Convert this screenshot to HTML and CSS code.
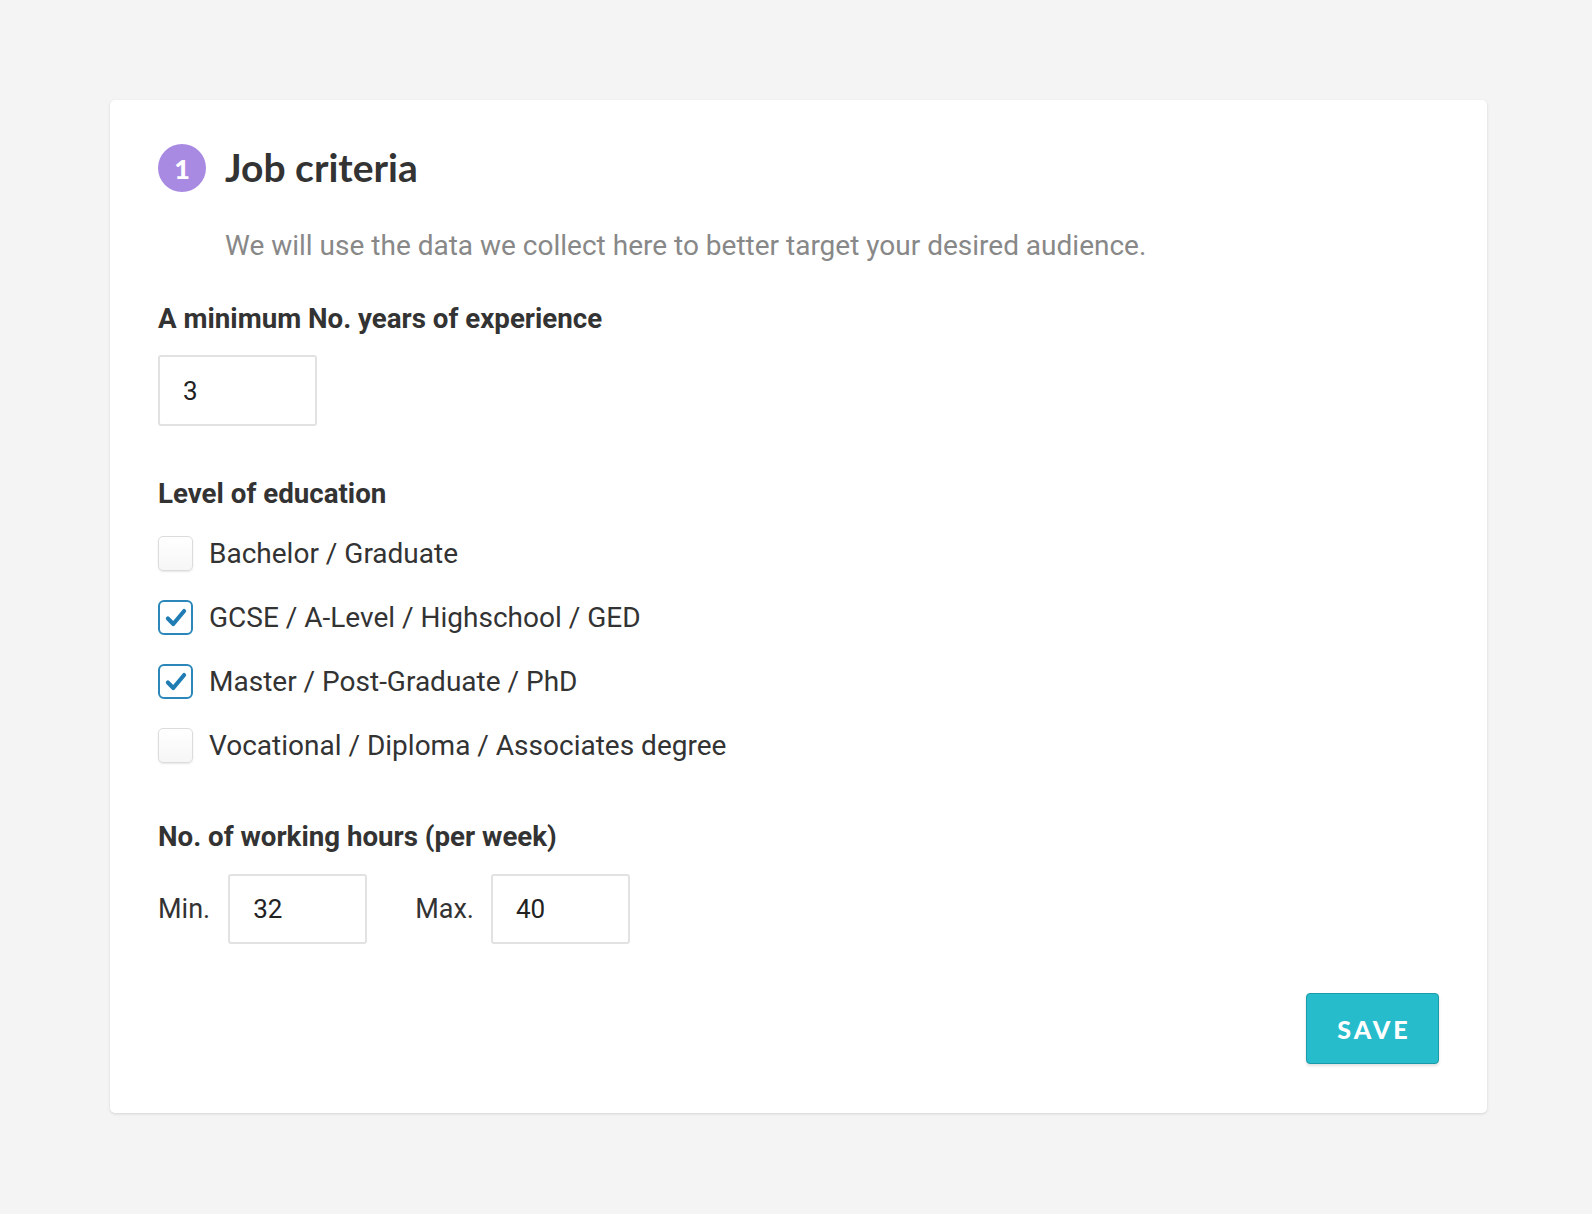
FILE: index.html
```html
<!DOCTYPE html>
<html lang="en">
<head>
<meta charset="utf-8">
<title>Job criteria</title>
<link rel="stylesheet" href="styles.css">
</head>
<body>
<main class="page">
  <section class="card">
    <header class="card-head">
      <span class="step">1</span>
      <h1 class="title">Job criteria</h1>
    </header>
    <p class="intro">We will use the data we collect here to better target your desired audience.</p>

    <div class="field">
      <label class="label">A minimum No. years of experience</label>
      <div class="input input-years">3</div>
    </div>

    <div class="field field-edu">
      <div class="label">Level of education</div>
      <ul class="checks">
        <li class="check-row"><span class="box"></span><span>Bachelor / Graduate</span></li>
        <li class="check-row"><span class="box checked"><svg viewBox="0 0 24 24" width="26" height="26"><path d="M4.5 12.5 L9.5 17.5 L19.5 5.5" fill="none" stroke="#1f7db4" stroke-width="3.8" stroke-linecap="round" stroke-linejoin="round"/></svg></span><span>GCSE / A-Level / Highschool / GED</span></li>
        <li class="check-row"><span class="box checked"><svg viewBox="0 0 24 24" width="26" height="26"><path d="M4.5 12.5 L9.5 17.5 L19.5 5.5" fill="none" stroke="#1f7db4" stroke-width="3.8" stroke-linecap="round" stroke-linejoin="round"/></svg></span><span>Master / Post-Graduate / PhD</span></li>
        <li class="check-row"><span class="box"></span><span>Vocational / Diploma / Associates degree</span></li>
      </ul>
    </div>

    <div class="field field-hours">
      <div class="label">No. of working hours (per week)</div>
      <div class="hours">
        <span class="hours-lbl">Min.</span>
        <div class="input input-hours">32</div>
        <span class="hours-lbl hours-max">Max.</span>
        <div class="input input-hours">40</div>
      </div>
    </div>

    <div class="actions">
      <button class="save">SAVE</button>
    </div>
  </section>
</main>
</body>
</html>
```

FILE: styles.css
```css
* { box-sizing: border-box; }
html, body { margin: 0; padding: 0; }
body {
  background: #f4f4f4;
  font-family: Roboto, "Liberation Sans", Arial, sans-serif;
  color: #333;
}
.page {
  padding: 100px 105px 102px 110px;
}
.card {
  width: 1377px;
  background: #fff;
  border-radius: 5px;
  box-shadow: 0 1px 3px rgba(0,0,0,0.13);
  padding: 44px 48px 49px 48px;
}
.card-head {
  display: flex;
  align-items: center;
  gap: 19px;
  height: 48px;
}
.step {
  width: 48px;
  height: 48px;
  border-radius: 50%;
  background: #a98ae2;
  color: #fff;
  font-family: Lato, "Open Sans", sans-serif;
  font-weight: 900;
  font-size: 27px;
  display: flex;
  align-items: center;
  justify-content: center;
}
.title {
  margin: -3px 0 0 0;
  font-family: Lato, "Open Sans", sans-serif;
  font-weight: 700;
  font-size: 39px;
  line-height: 48px;
  color: #333;
}
.intro {
  margin: 37px 0 0 67px;
  font-size: 28px;
  line-height: 34px;
  color: #888;
}
.field { margin-top: 40px; }
.label {
  display: block;
  font-size: 27.7px;
  font-weight: 700;
  line-height: 32px;
  color: #333;
}
.input {
  border: 2px solid #e2e2e2;
  border-radius: 3px;
  background: #fff;
  font-size: 26px;
  color: #222;
  display: flex;
  align-items: center;
}
.input-years {
  margin-top: 20px;
  width: 159px;
  height: 71px;
  padding-left: 23px;
}
.field-edu { margin-top: 52px; }
.checks {
  list-style: none;
  margin: 26px 0 0 0;
  padding: 0;
  display: flex;
  flex-direction: column;
  gap: 29px;
}
.check-row {
  display: flex;
  align-items: center;
  gap: 16px;
  height: 35px;
  font-size: 28px;
  color: #333;
}
.box {
  width: 35px;
  height: 35px;
  border-radius: 5px;
  border: 1px solid #dcdcdc;
  background: linear-gradient(#fff, #f6f6f6);
  box-shadow: 0 1px 2px rgba(0,0,0,0.10);
  display: flex;
  align-items: center;
  justify-content: center;
  flex: none;
}
.box.checked {
  border: 2px solid #2b87b9;
  border-radius: 6px;
  background: #fff;
  box-shadow: none;
}
.field-hours { margin-top: 58px; }
.hours {
  margin-top: 21px;
  display: flex;
  align-items: center;
}
.hours-lbl {
  font-size: 27px;
  color: #333;
  margin-right: 18px;
}
.hours-max { margin-left: 48px; margin-right: 17px; }
.input-hours {
  width: 139px;
  height: 70px;
  padding-left: 23px;
}
.actions {
  margin-top: 49px;
  display: flex;
  justify-content: flex-end;
}
.save {
  width: 133px;
  height: 71px;
  background: #26bccc;
  border: 1px solid #1b9ba9;
  border-radius: 4px;
  box-shadow: 0 2px 3px rgba(0,0,0,0.12);
  color: #fff;
  font-family: Lato, "Open Sans", sans-serif;
  font-weight: 900;
  font-size: 25px;
  letter-spacing: 3px;
  padding: 0 0 0 3px;
  cursor: pointer;
}
```
